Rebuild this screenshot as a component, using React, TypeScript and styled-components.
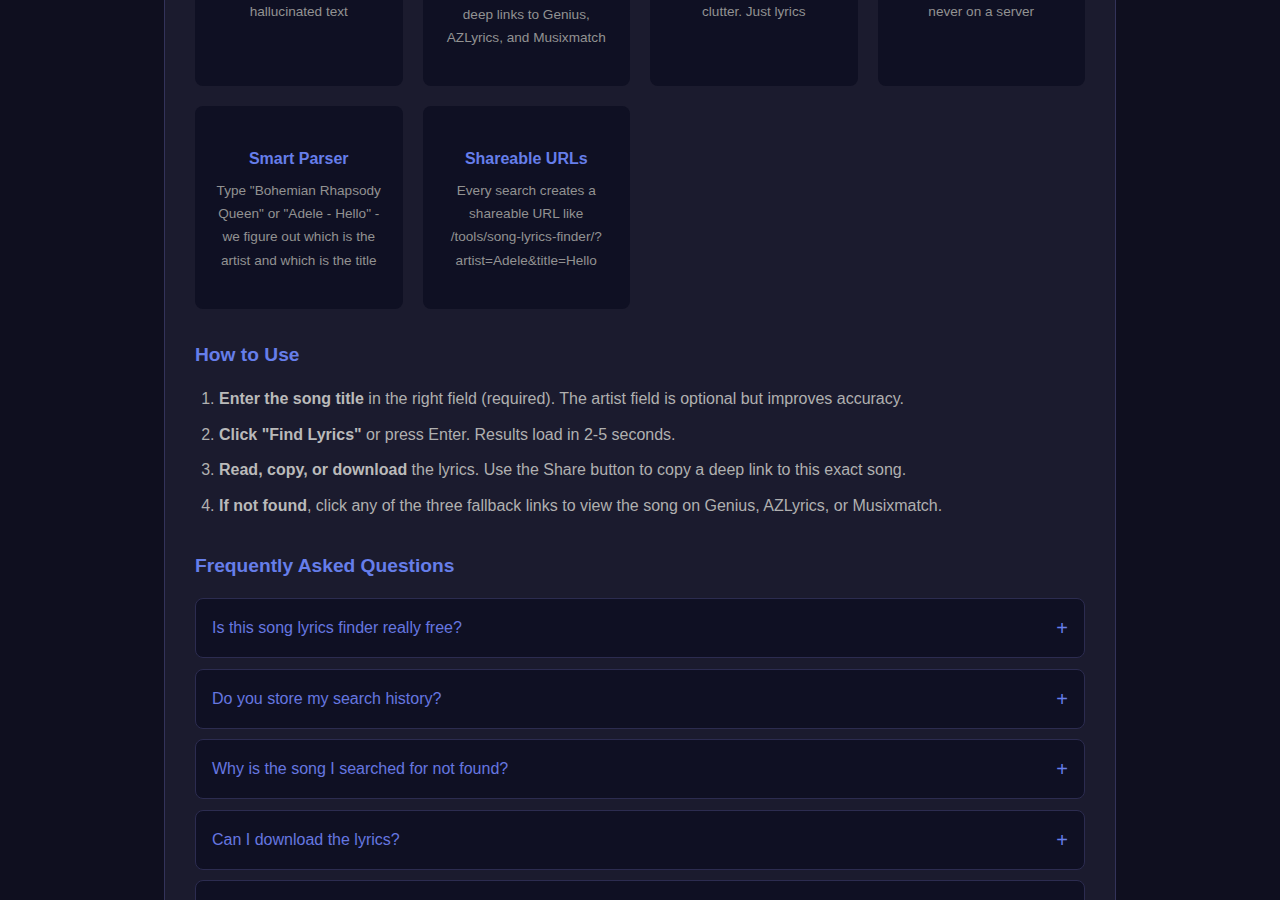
import React from "react"
import styled, { createGlobalStyle } from "styled-components"

const GlobalStyle = createGlobalStyle`
    body {
        margin: 0;
        background: #0f0f1f;
        font-family: "Liberation Sans", Arial, sans-serif;
        overflow: hidden;
    }
`

const Page = styled.div`
    width: 890px;
    margin: -116px auto 0;
    padding: 0 30px 40px;
    background: #1b1b2e;
    border-left: 1px solid #33335a;
    border-right: 1px solid #33335a;
`

const Features = styled.div`
    display: grid;
    grid-template-columns: repeat(4, 1fr);
    gap: 20px;
`

const Card = styled.div<{ $short?: boolean }>`
    background: #0f1023;
    border-radius: 8px;
    padding: ${(p) => (p.$short ? 40 : 43)}px 20px 37px;
    text-align: center;
`

const CardTitle = styled.div`
    color: #667eea;
    font-size: 16px;
    font-weight: bold;
    line-height: 1.2;
    margin-bottom: 10px;
`

const CardText = styled.div`
    color: #929292;
    font-size: 13.6px;
    line-height: 1.715;
    white-space: pre-line;
`

const Heading = styled.h2<{ $before?: number; $after?: number }>`
    color: #667eea;
    font-size: 19.2px;
    font-weight: bold;
    line-height: 1.15;
    margin: ${(p) => p.$before ?? 35}px 0 ${(p) => p.$after ?? 20}px;
`

const Steps = styled.ol`
    margin: 0;
    padding-left: 24px;
    color: #b0b0b0;
    font-size: 16px;
    line-height: 1.6;
    li {
        margin-bottom: 10px;
    }
    strong {
        color: #bababa;
    }
`

const Question = styled.div`
    display: flex;
    align-items: center;
    justify-content: space-between;
    background: #0f1023;
    border: 1px solid #2c2c50;
    border-radius: 8px;
    padding: 20px 16px;
    margin-bottom: 10.5px;
    color: #6677e0;
    font-size: 16px;
`

const Plus = styled.span`
    font-size: 20px;
    line-height: 18px;
    color: #667eea;
`

// first row sits above the fold, lines kept as in the original cards
const features = [
    { title: "Real Lyrics", text: "Sourced from a real\nlyrics database, no\nhallucinated text", short: true },
    { title: "Fallback Links", text: "If a song is missing,\nyou still get\ndeep links to Genius,\nAZLyrics, and Musixmatch" },
    { title: "Clean Reading", text: "No ads, no popups,\nno sign-up, no\nclutter. Just lyrics", short: true },
    { title: "Private", text: "Searches run in your\nbrowser and stay there,\nnever on a server", short: true },
    { title: "Smart Parser", text: "Type \"Bohemian Rhapsody Queen\" or \"Adele - Hello\" - we figure out which is the artist and which is the title" },
    { title: "Shareable URLs", text: "Every search creates a shareable URL like /tools/song-lyrics-finder/?artist=Adele&title=Hello" },
]

const faqs = [
    "Is this song lyrics finder really free?",
    "Do you store my search history?",
    "Why is the song I searched for not found?",
    "Can I download the lyrics?",
    "Does it work on mobile?",
]

export default function App() {
    return <>
        <GlobalStyle />
        <Page>
            <Features>
                {features.map((f) => <Card key={f.title} $short={f.short}>
                    <CardTitle>{f.title}</CardTitle>
                    <CardText>{f.text}</CardText>
                </Card>)}
            </Features>

            <Heading>How to Use</Heading>
            <Steps>
                <li><strong>Enter the song title</strong> in the right field (required). The artist field is optional but improves accuracy.</li>
                <li><strong>Click "Find Lyrics"</strong> or press Enter. Results load in 2-5 seconds.</li>
                <li><strong>Read, copy, or download</strong> the lyrics. Use the Share button to copy a deep link to this exact song.</li>
                <li><strong>If not found</strong>, click any of the three fallback links to view the song on Genius, AZLyrics, or Musixmatch.</li>
            </Steps>

            <Heading $before={37} $after={21}>Frequently Asked Questions</Heading>
            {faqs.map((q) => <Question key={q}>
                <span>{q}</span>
                <Plus>+</Plus>
            </Question>)}
        </Page>
    </>
}
